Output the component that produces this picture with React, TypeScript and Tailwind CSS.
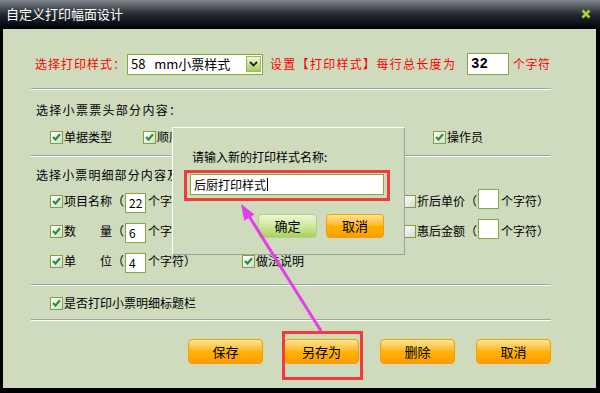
import React from "react";

const F = "font-['Noto_Sans_CJK_SC','Noto_Sans',sans-serif]";

function Check({ checked = true }: { checked?: boolean }) {
  return (
    <span className="inline-flex w-[13px] h-[13px] shrink-0 items-center justify-center border border-[#7fa33a] bg-linear-to-br from-white to-[#d8d8d8]">
      {checked && (
        <svg width="9" height="8" viewBox="0 0 9 8">
          <path d="M1 4 L3.5 6.5 L8 1.2" stroke="#1f9a2a" strokeWidth="2.2" fill="none" />
        </svg>
      )}
    </span>
  );
}

function Box({ v, w = 21, h = 20, cls = "" }: { v: string; w?: number; h?: number; cls?: string }) {
  return (
    <span
      className={`inline-flex items-center shrink-0 bg-white border border-[#87a83e] pl-[3px] text-black ${cls}`}
      style={{ width: w, height: h }}
    >
      {v}
    </span>
  );
}

function Sep() {
  return <div className="ml-[-3px] w-[520px] h-[2px] border-t border-[#a3a3a3] border-b border-b-white" />;
}

function OrangeBtn({ label, w = 75, h = 25 }: { label: string; w?: number; h?: number }) {
  return (
    <div
      className="flex items-center justify-center rounded-[4px] border border-[#f0a000] bg-linear-to-b from-[#ffe58c] via-[#ffb400] to-[#ff9d00] text-[13px] text-black"
      style={{ width: w, height: h }}
    >
      {label}
    </div>
  );
}

function Item({ label, checked = true, w }: { label: string; checked?: boolean; w: number }) {
  return (
    <div className="flex items-center gap-[1px] shrink-0 overflow-hidden" style={{ width: w }}>
      <Check checked={checked} />
      <span className="text-[12px] whitespace-pre leading-[16px]">{label}</span>
    </div>
  );
}

function DetailCell({
  label,
  v,
  checked = true,
  w,
}: {
  label: string;
  v: string;
  checked?: boolean;
  w: number;
}) {
  return (
    <div className="flex items-center shrink-0 overflow-hidden" style={{ width: w }}>
      <Check checked={checked} />
      <span className="ml-[1px] w-[60px] shrink-0 text-[12px] whitespace-pre leading-[16px]">{label}</span>
      <span className="ml-[1px] shrink-0">
        <Box v={v} cls="text-[12px]" />
      </span>
      <span className="ml-[2px] shrink-0 text-[12px] whitespace-pre leading-[16px]">个字符）</span>
    </div>
  );
}

export default function App() {
  return (
    <div className={`relative w-[600px] h-[393px] bg-black overflow-hidden ${F}`}>
      {/* title bar */}
      <div className="h-[28px] flex items-center justify-between bg-linear-to-b from-[#80868b] via-[#262c32] to-[#02060a]">
        <span className="ml-[6px] text-white text-[13px]">自定义打印幅面设计</span>
        <svg className="mr-[9px]" width="10" height="10" viewBox="0 0 10 10">
          <path d="M1.5 1.5 L8.5 8.5 M8.5 1.5 L1.5 8.5" stroke="#a6d23a" strokeWidth="2.6" />
        </svg>
      </div>
      {/* body */}
      <div className="mt-[1px] ml-[3px] w-[593px] h-[359px] bg-[#cfdbbd] pl-[31px] flex flex-col text-black">
        {/* row 1 */}
        <div className="mt-[24px] h-[22px] flex items-center text-[#ff0000] text-[12px]">
          <span className="ml-[1px] w-[92px] tracking-[1px] whitespace-nowrap">选择打印样式：</span>
          <div className="w-[136px] h-[21px] flex items-center bg-white border border-[#87a83e]">
            <span className="flex-1 pl-[3px] text-black text-[13px] whitespace-pre">58   mm小票样式</span>
            <span className="mr-[1px] w-[15px] h-[16px] flex items-center justify-center border border-[#9ab860] bg-linear-to-b from-[#f0f8d8] to-[#a8cc50]">
              <svg width="9" height="6" viewBox="0 0 9 6">
                <path d="M1 1 L4.5 4.5 L8 1" stroke="#222" strokeWidth="1.8" fill="none" />
              </svg>
            </span>
          </div>
          <span className="ml-[7px] w-[197px] tracking-[1.3px] whitespace-nowrap">设置【打印样式】每行总长度为</span>
          <Box v="32" w={42} h={22} cls="font-bold text-[14px] font-['Liberation_Mono',monospace]" />
          <span className="ml-[4px] tracking-[0.5px] whitespace-nowrap">个字符</span>
        </div>
        <div className="mt-[13px]">
          <Sep />
        </div>
        <div className="mt-[12px] ml-[2px] h-[16px] leading-[16px] text-[12px] tracking-[1.3px]">选择小票票头部分内容：</div>
        <div className="mt-[11px] ml-[16px] h-[16px] flex items-center">
          <Item label="单据类型" w={93} />
          <Item label="顺序号" w={29} />
          <div className="w-[261px] shrink-0" />
          <Item label="操作员" w={100} />
        </div>
        <div className="mt-[10px]">
          <Sep />
        </div>
        <div className="mt-[10px] ml-[2px] w-[136px] overflow-hidden h-[16px] leading-[16px] text-[12px] tracking-[1.1px] whitespace-nowrap">
          选择小票明细部分内容及大小：
        </div>
        <div className="mt-[8px] ml-[16px] h-[20px] flex items-center">
          <DetailCell label="项目名称（" v="22" w={122} />
          <div className="w-[231px] shrink-0" />
          <DetailCell label="折后单价（" v="" checked={false} w={150} />
        </div>
        <div className="mt-[10px] ml-[16px] h-[20px] flex items-center">
          <DetailCell label="数　　量（" v="6" w={122} />
          <div className="w-[231px] shrink-0" />
          <DetailCell label="惠后金额（" v="" checked={false} w={150} />
        </div>
        <div className="mt-[10px] ml-[16px] h-[20px] flex items-center">
          <DetailCell label="单　　位（" v="4" w={192} />
          <Item label="做法说明" w={161} />
        </div>
        <div className="mt-[13px]">
          <Sep />
        </div>
        <div className="mt-[9px] ml-[16px] h-[16px] flex items-center">
          <Item label="是否打印小票明细标题栏" w={200} />
        </div>
        <div className="mt-[8px]">
          <Sep />
        </div>
        <div className="mt-[18px] ml-[154px] flex gap-[21px]">
          <OrangeBtn label="保存" />
          <OrangeBtn label="另存为" />
          <OrangeBtn label="删除" />
          <OrangeBtn label="取消" />
        </div>
      </div>

      {/* dialog */}
      <div className="absolute left-[172px] top-[127px] w-[233px] h-[128px] bg-[#cfdbbd] border-t border-l border-t-white border-l-white border-r border-b border-r-[#a0a0a0] border-b-[#a0a0a0] flex flex-col">
        <div className="mt-[21px] ml-[19px] h-[16px] leading-[16px] text-[12px] text-black">请输入新的打印样式名称:</div>
        <div className="mt-[9px] ml-[17px] w-[194px] h-[21px] bg-white border border-[#87a83e] flex items-center pl-[3px] text-[12px] text-black">
          后厨打印样式<span className="ml-[1px] w-[1px] h-[13px] bg-black" />
        </div>
        <div className="mt-[19px] ml-[85px] flex gap-[9px]">
          <div className="w-[59px] h-[24px] flex items-center justify-center rounded-[4px] border border-[#b4d47c] bg-linear-to-b from-[#eef8d6] via-[#cfe89c] to-[#a8d05a] text-[13px] text-black">
            确定
          </div>
          <OrangeBtn label="取消" w={58} h={24} />
        </div>
      </div>

      {/* annotations */}
      <div className="absolute left-[184px] top-[170px] w-[206px] h-[31px] border-[3px] border-[#f43a3a]" />
      <div className="absolute left-[282px] top-[331px] w-[81px] h-[49px] border-[3px] border-[#f43a3a]" />
      <svg className="absolute left-0 top-0 pointer-events-none" width="600" height="393" viewBox="0 0 600 393">
        <line x1="321" y1="331" x2="247" y2="213" stroke="#e53de8" strokeWidth="3" />
        <polygon points="241,204 254.5,214.4 244.3,220.8" fill="#e53de8" />
      </svg>
    </div>
  );
}
